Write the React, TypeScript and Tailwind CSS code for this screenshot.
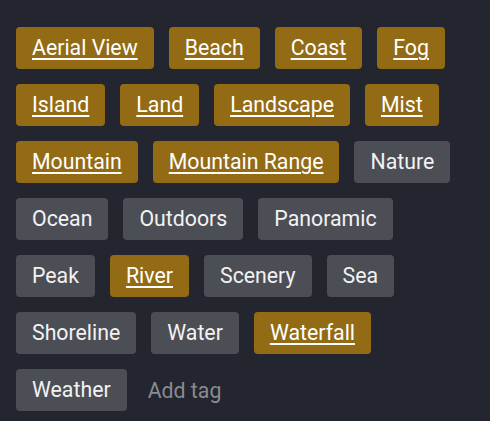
const tags: { label: string; selected: boolean }[] = [
  { label: 'Aerial View', selected: true },
  { label: 'Beach', selected: true },
  { label: 'Coast', selected: true },
  { label: 'Fog', selected: true },
  { label: 'Island', selected: true },
  { label: 'Land', selected: true },
  { label: 'Landscape', selected: true },
  { label: 'Mist', selected: true },
  { label: 'Mountain', selected: true },
  { label: 'Mountain Range', selected: true },
  { label: 'Nature', selected: false },
  { label: 'Ocean', selected: false },
  { label: 'Outdoors', selected: false },
  { label: 'Panoramic', selected: false },
  { label: 'Peak', selected: false },
  { label: 'River', selected: true },
  { label: 'Scenery', selected: false },
  { label: 'Sea', selected: false },
  { label: 'Shoreline', selected: false },
  { label: 'Water', selected: false },
  { label: 'Waterfall', selected: true },
  { label: 'Weather', selected: false },
]

export default function App() {
  return (
    <div className="min-h-screen w-full bg-[#23262e] pl-4 pr-4 pt-[27px] font-['Roboto',sans-serif]">
      {/* tag list + inline input */}
      <div className="flex flex-wrap gap-[15px]">
        {tags.map(tag => (
          <button
            key={tag.label}
            className={
              tag.selected
                ? 'h-[42px] rounded-[4px] bg-[#936b15] px-4 text-[21.3px] leading-none text-white underline underline-offset-[3px] decoration-2'
                : 'h-[42px] rounded-[4px] bg-[#4c4e56] px-4 text-[21.3px] leading-none text-[#f2f2f2]'
            }
          >
            {tag.label}
          </button>
        ))}
        <input
          placeholder="Add tag"
          className="h-[42px] w-[120px] bg-transparent px-1.5 text-[21.3px] text-white outline-none placeholder:text-[#898b91]"
        />
      </div>
    </div>
  )
}
